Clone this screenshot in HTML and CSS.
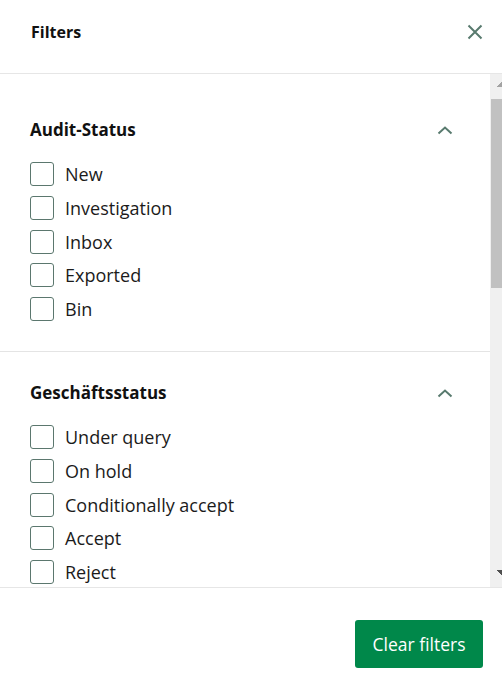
FILE: index.html
```html
<!DOCTYPE html>
<html lang="en">
<head>
<meta charset="utf-8">
<title>Filters</title>
<link rel="stylesheet" href="styles.css">
</head>
<body>
<div class="dialog">
  <header class="dialog-header">
    <h1 class="dialog-title">Filters</h1>
    <button class="icon-btn close-btn" aria-label="Close">
      <svg width="16" height="16" viewBox="0 0 16 16"><path d="M1.5 1.5 L14.5 14.5 M14.5 1.5 L1.5 14.5" stroke="currentColor" stroke-width="2" fill="none"/></svg>
    </button>
  </header>
  <div class="dialog-body">
    <div class="body-content">
      <section class="filter-section">
        <div class="section-head">
          <h2 class="section-title">Audit-Status</h2>
          <svg class="chevron" width="16" height="10" viewBox="0 0 16 10"><path d="M1.5 8.5 L8 2.5 L14.5 8.5" stroke="currentColor" stroke-width="2" fill="none"/></svg>
        </div>
        <ul class="options">
          <li class="option"><span class="box"></span><span class="label">New</span></li>
          <li class="option"><span class="box"></span><span class="label">Investigation</span></li>
          <li class="option"><span class="box"></span><span class="label">Inbox</span></li>
          <li class="option"><span class="box"></span><span class="label">Exported</span></li>
          <li class="option"><span class="box"></span><span class="label">Bin</span></li>
        </ul>
      </section>
      <section class="filter-section">
        <div class="section-head">
          <h2 class="section-title">Geschäftsstatus</h2>
          <svg class="chevron" width="16" height="10" viewBox="0 0 16 10"><path d="M1.5 8.5 L8 2.5 L14.5 8.5" stroke="currentColor" stroke-width="2" fill="none"/></svg>
        </div>
        <ul class="options">
          <li class="option"><span class="box"></span><span class="label">Under query</span></li>
          <li class="option"><span class="box"></span><span class="label">On hold</span></li>
          <li class="option"><span class="box"></span><span class="label">Conditionally accept</span></li>
          <li class="option"><span class="box"></span><span class="label">Accept</span></li>
          <li class="option"><span class="box"></span><span class="label">Reject</span></li>
        </ul>
      </section>
    </div>
    <div class="scrollbar" aria-hidden="true">
      <div class="sb-btn sb-up"><span class="sb-arrow-up"></span></div>
      <div class="sb-track">
        <div class="sb-thumb"></div>
      </div>
      <div class="sb-btn sb-down"><span class="sb-arrow-down"></span></div>
    </div>
  </div>
  <footer class="dialog-footer">
    <button class="primary-btn">Clear filters</button>
  </footer>
</div>
</body>
</html>
```
FILE: styles.css
```css
html, body {
  margin: 0;
  padding: 0;
  height: 100%;
  overflow: hidden;
  background: #ffffff;
}
body {
  font-family: "Open Sans", "Noto Sans", sans-serif;
  color: #1b1b1b;
}
.dialog {
  display: flex;
  flex-direction: column;
  height: 699px;
  width: 502px;
}
.dialog-header {
  flex: 0 0 auto;
  height: 73px;
  border-bottom: 1px solid #e6e6e6;
  display: flex;
  align-items: center;
  justify-content: space-between;
  padding: 0 19px 0 31px;
}
.dialog-title {
  margin: 0;
  font-size: 16px;
  font-weight: 700;
  color: #111;
  line-height: 24px;
  padding-bottom: 9px;
}
.icon-btn {
  border: 0;
  background: none;
  padding: 0;
  color: #587a6e;
  display: flex;
}
.close-btn {
  margin-bottom: 9px;
}
.dialog-body {
  flex: 0 0 513px;
  display: flex;
  overflow: hidden;
}
.body-content {
  flex: 1 1 auto;
  overflow: hidden;
  padding-top: 15px;
}
.scrollbar {
  flex: 0 0 12px;
  display: flex;
  flex-direction: column;
  background: #f0f0f0;
}
.sb-btn {
  flex: 0 0 17px;
  display: flex;
  justify-content: flex-end;
}
.sb-up {
  align-items: flex-end;
  padding-bottom: 4px;
  box-sizing: border-box;
}
.sb-down {
  align-items: flex-start;
}
.sb-arrow-up {
  width: 6px;
  height: 5px;
  background: linear-gradient(to bottom right, transparent 50%, #a3a3a3 50%);
}
.sb-arrow-down {
  width: 6px;
  height: 5px;
  background: linear-gradient(to bottom left, #505050 50%, transparent 50%);
}
.sb-track {
  flex: 1 1 auto;
  padding-top: 8px;
}
.sb-thumb {
  height: 189px;
  background: #c1c1c1;
  margin-left: 1px;
}
.filter-section {
  padding: 29px 0 30px 30px;
  border-bottom: 1px solid #e4e4e4;
}
.section-head {
  display: flex;
  align-items: center;
  justify-content: space-between;
  padding-right: 37px;
  height: 24px;
}
.section-title {
  margin: 0;
  font-size: 17px;
  font-weight: 700;
  color: #111;
  line-height: 24px;
}
.chevron {
  color: #587a6e;
}
.options {
  list-style: none;
  margin: 20px 0 0;
  padding: 0;
  display: flex;
  flex-direction: column;
  gap: 9.75px;
}
.option {
  display: flex;
  align-items: center;
  gap: 11px;
  height: 24px;
}
.box {
  box-sizing: border-box;
  width: 24px;
  height: 24px;
  border: 1.5px solid #5b776e;
  border-radius: 3px;
  flex: 0 0 auto;
}
.label {
  font-size: 18px;
  line-height: 24px;
  color: #1b1b1b;
}
.dialog-footer {
  flex: 0 0 111px;
  border-top: 1px solid #e6e6e6;
  display: flex;
  justify-content: flex-end;
  align-items: flex-start;
  padding: 32px 19px 0 0;
  box-sizing: border-box;
}
.primary-btn {
  height: 48px;
  width: 128px;
  border: 0;
  border-radius: 3px;
  background: #00884a;
  color: #ffffff;
  font-family: "Open Sans", "Noto Sans", sans-serif;
  font-size: 17.5px;
  padding: 0;
}
```
